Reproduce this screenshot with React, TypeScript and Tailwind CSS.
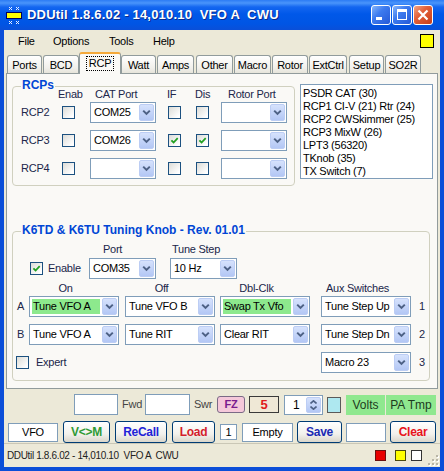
import React from 'react';

const FONT = "font-['Liberation_Sans',Arial,sans-serif]";
const LBL = 'text-[#20264a]';

function Chevron() {
  return (
    <svg width="9" height="7" viewBox="0 0 9 7">
      <path d="M1.2 1.6 L4.5 4.9 L7.8 1.6" stroke="#4D6185" strokeWidth="2" fill="none" />
    </svg>
  );
}

function Combo({ cls, value = '', green = false }: { cls: string; value?: string; green?: boolean }) {
  return (
    <div className={`flex h-[21px] shrink-0 border border-[#7F9DB9] bg-white p-[1px] ${cls}`}>
      <div
        className={`m-[1px] mr-[2px] flex flex-1 items-center overflow-hidden whitespace-nowrap pl-[1px] text-black ${
          green ? 'bg-[#8DE98D]' : ''
        }`}
      >
        {value}
      </div>
      <div className="flex w-[15px] items-center justify-center rounded-[2px] border border-[#BCCDF4] bg-[linear-gradient(to_bottom,#D6E2FC,#B3C7F5)]">
        <Chevron />
      </div>
    </div>
  );
}

function Check({ on = false }: { on?: boolean }) {
  return (
    <div className="flex h-[13px] w-[13px] shrink-0 items-center justify-center border border-[#1C5180] bg-[linear-gradient(135deg,#DCDCD7,#FFFFFF_85%)]">
      {on && (
        <svg width="9" height="9" viewBox="0 0 9 9">
          <path d="M1.4 4.3 L3.6 6.5 L7.7 2.2" stroke="#21A121" strokeWidth="1.8" fill="none" />
        </svg>
      )}
    </div>
  );
}

function Box({ cls, children }: { cls: string; children?: React.ReactNode }) {
  return (
    <div className={`flex shrink-0 items-center justify-center border border-[#7F9DB9] bg-white ${cls}`}>{children}</div>
  );
}

function Btn({ cls, children }: { cls: string; children: React.ReactNode }) {
  return (
    <div
      className={`flex h-[22px] shrink-0 items-center justify-center rounded-[3px] border border-[#003C74] bg-[linear-gradient(to_bottom,#FFFFFF,#F2F1EC_60%,#DAD6CB)] text-[12px] font-bold tracking-[-0.3px] ${cls}`}
    >
      {children}
    </div>
  );
}

function Group({ title, cls, children }: { title: string; cls: string; children: React.ReactNode }) {
  return (
    <div className={`flex shrink-0 flex-col rounded-[4px] border border-[#D0D0BF] ${cls}`}>
      <div className="-mt-[9px] -mb-[5px] ml-[8px] h-[14px] w-fit bg-[#FAF9F6] px-[1px] text-[12px] font-bold leading-[14px] tracking-normal text-[#0046D5]">
        {title}
      </div>
      {children}
    </div>
  );
}

function CapBtn({ kind }: { kind: 'min' | 'max' | 'close' }) {
  const bg =
    kind === 'close'
      ? 'bg-[linear-gradient(135deg,#F2A585,#E2603A_40%,#C83D18)]'
      : 'bg-[linear-gradient(135deg,#86B6FB,#3D7BEF_40%,#2559D7)]';
  return (
    <div className={`flex h-[20px] w-[20px] items-center justify-center rounded-[3px] border border-white ${bg}`}>
      <svg width="18" height="18" viewBox="0 0 18 18">
        {kind === 'min' && <rect x="4" y="11" width="6" height="3" fill="#fff" />}
        {kind === 'max' && (
          <>
            <rect x="4.5" y="3.5" width="9" height="10" fill="none" stroke="#fff" strokeWidth="1" />
            <rect x="4" y="3" width="10" height="3" fill="#fff" />
          </>
        )}
        {kind === 'close' && <path d="M4.5 4.5 L13.5 13.5 M13.5 4.5 L4.5 13.5" stroke="#fff" strokeWidth="2.2" />}
      </svg>
    </div>
  );
}

function AppIcon() {
  return (
    <svg width="16" height="19" viewBox="0 0 16 19">
      <rect x="0.5" y="6.5" width="15" height="6" fill="#FFFF00" stroke="#00005A" />
      <path d="M3 1 L6 4 M6 1 L3 4 M10 1 L13 4 M13 1 L10 4" stroke="#E8EEFF" strokeWidth="1" />
      <path d="M3 15 L6 18 M6 15 L3 18 M10 15 L13 18 M13 15 L10 18" stroke="#E8EEFF" strokeWidth="1" />
    </svg>
  );
}

function Grip() {
  const dots = [
    [9, 1],
    [9, 5],
    [5, 5],
    [9, 9],
    [5, 9],
    [1, 9],
  ];
  return (
    <svg width="12" height="12" viewBox="0 0 12 12">
      {dots.map(([x, y]) => (
        <g key={`${x}-${y}`}>
          <rect x={x + 1} y={y + 1} width="2" height="2" fill="#FFFFFF" />
          <rect x={x} y={y} width="2" height="2" fill="#B8B5A6" />
        </g>
      ))}
    </svg>
  );
}

const tabs = [
  { label: 'Ports', cls: 'w-[35px]' },
  { label: 'BCD', cls: 'ml-[1px] w-[36px]' },
  { label: 'RCP', cls: 'w-[42px]', active: true },
  { label: 'Watt', cls: 'w-[35px]' },
  { label: 'Amps', cls: 'ml-[1px] w-[37px]' },
  { label: 'Other', cls: 'ml-[2px] w-[37px]' },
  { label: 'Macro', cls: 'ml-[1px] w-[37px]' },
  { label: 'Rotor', cls: 'ml-[1px] w-[36px]' },
  { label: 'ExtCtrl', cls: 'ml-[1px] w-[38px]' },
  { label: 'Setup', cls: 'ml-[2px] w-[35px]' },
  { label: 'SO2R', cls: 'ml-[1px] w-[36px]' },
];

const rcpRows = [
  { name: 'RCP2', port: 'COM25', iff: false, dis: false },
  { name: 'RCP3', port: 'COM26', iff: true, dis: true },
  { name: 'RCP4', port: '', iff: false, dis: false },
];

const portList = [
  'PSDR CAT (30)',
  'RCP1 CI-V (21) Rtr (24)',
  'RCP2 CWSkimmer (25)',
  'RCP3 MixW (26)',
  'LPT3 (56320)',
  'TKnob (35)',
  'TX Switch (7)',
];

export default function App() {
  return (
    <div
      className={`flex h-[471px] w-[444px] flex-col overflow-hidden bg-[#0B4ED8] text-[11px] tracking-[-0.25px] text-black ${FONT}`}
    >
      {/* Title bar */}
      <div className="flex h-[30px] shrink-0 items-center bg-[linear-gradient(to_bottom,#2C7BF4_0px,#4A95FB_3px,#1466F0_7px,#0058E9_14px,#0055E4_24px,#0A4FD8_30px)] pl-[6px] pr-[11px]">
        <AppIcon />
        <div className="ml-[5px] whitespace-pre text-[13px] font-bold tracking-[0.2px] text-white [text-shadow:1px_1px_0_#0A2A8C]">
          DDUtil 1.8.6.02 - 14,010.10  VFO A  CWU
        </div>
        <div className="ml-auto flex gap-[1px]">
          <CapBtn kind="min" />
          <CapBtn kind="max" />
          <CapBtn kind="close" />
        </div>
      </div>

      <div className="mx-[4px] flex flex-1 flex-col bg-[#ECE9D8]">
        {/* Menu bar */}
        <div className="flex h-[22px] shrink-0 items-center pl-[14px] pr-[6px]">
          <span className="w-[35px]">File</span>
          <span className="w-[56px]">Options</span>
          <span className="w-[44px]">Tools</span>
          <span>Help</span>
          <div className="ml-auto h-[14px] w-[14px] border border-black bg-[#FFFF00]" />
        </div>

        {/* Tabs */}
        <div className="flex h-[21px] shrink-0 items-end pl-[3px]">
          {tabs.map((t) =>
            t.active ? (
              <div
                key={t.label}
                className={`relative z-10 -mb-[1px] flex h-[22px] items-center justify-center rounded-t-[3px] border-x border-t-2 border-[#919B9C] border-t-[#F5A93A] bg-[#FAF9F6] pb-[1px] ${t.cls}`}
              >
                <span className="border border-dotted border-black px-[2px] leading-[13px]">{t.label}</span>
              </div>
            ) : (
              <div
                key={t.label}
                className={`flex h-[18px] items-center justify-center rounded-t-[3px] border-x border-t border-[#919B9C] bg-[linear-gradient(to_bottom,#FFFFFF,#F1F0EB_70%,#E6E4DA)] pt-[1px] ${t.cls}`}
              >
                {t.label}
              </div>
            ),
          )}
        </div>

        {/* Tab page */}
        <div className="mx-[2px] flex h-[316px] shrink-0 flex-col border border-[#919B9C] bg-[#FAF9F6]">
          <div className="flex items-start">
            <Group title="RCPs" cls="ml-[5px] mt-[12px] h-[100px] w-[283px]">
              <div className={`flex h-[14px] items-center ${LBL}`}>
                <span className="w-[45px]" />
                <span className="w-[37px]">Enab</span>
                <span className="w-[72px]">CAT Port</span>
                <span className="w-[28px]">IF</span>
                <span className="w-[33px]">Dis</span>
                <span>Rotor Port</span>
              </div>
              {rcpRows.map((r, i) => (
                <div key={r.name} className={`flex h-[21px] items-center ${i === 0 ? 'mt-[1px]' : 'mt-[7px]'}`}>
                  <span className={`w-[49px] pl-[8px] ${LBL}`}>{r.name}</span>
                  <Check />
                  <Combo cls="ml-[15px] w-[66px]" value={r.port} />
                  <div className="ml-[12px]">
                    <Check on={r.iff} />
                  </div>
                  <div className="ml-[15px]">
                    <Check on={r.dis} />
                  </div>
                  <Combo cls="ml-[12px] w-[66px]" />
                </div>
              ))}
            </Group>

            <div className="ml-[5px] mt-[10px] h-[95px] w-[133px] shrink-0 border border-[#7F9DB9] bg-white pl-[2px] pt-[2px]">
              {portList.map((p) => (
                <div key={p} className="whitespace-nowrap leading-[13px]">
                  {p}
                </div>
              ))}
            </div>
          </div>

          <Group title="K6TD & K6TU Tuning Knob - Rev. 01.01" cls="ml-[5px] mt-[45px] h-[150px] w-[418px]">
            <div className={`mt-[10px] flex h-[14px] items-center ${LBL}`}>
              <span className="w-[90px]" />
              <span className="w-[69px]">Port</span>
              <span>Tune Step</span>
            </div>
            <div className="mt-[2px] flex h-[21px] items-center">
              <span className="w-[17px]" />
              <Check on />
              <span className={`ml-[5px] w-[41px] ${LBL}`}>Enable</span>
              <Combo cls="w-[67px]" value="COM35" />
              <Combo cls="ml-[14px] w-[67px]" value="10 Hz" />
            </div>
            <div className={`mt-[2px] flex h-[14px] items-center ${LBL}`}>
              <span className="w-[16px]" />
              <span className="w-[73px] text-center">On</span>
              <span className="ml-[23px] w-[73px] text-center">Off</span>
              <span className="ml-[22px] w-[73px] text-center">Dbl-Clk</span>
              <span className="ml-[28px] w-[73px] text-center">Aux Switches</span>
            </div>
            <div className="mt-[1px] flex h-[21px] items-center">
              <span className={`w-[16px] pl-[4px] ${LBL}`}>A</span>
              <Combo cls="w-[90px]" value="Tune VFO A" green />
              <Combo cls="ml-[6px] w-[90px]" value="Tune VFO B" />
              <Combo cls="ml-[5px] w-[90px]" value="Swap Tx Vfo" green />
              <Combo cls="ml-[11px] w-[90px]" value="Tune Step Up" />
              <span className={`ml-[8px] ${LBL}`}>1</span>
            </div>
            <div className="mt-[7px] flex h-[21px] items-center">
              <span className={`w-[16px] pl-[4px] ${LBL}`}>B</span>
              <Combo cls="w-[90px]" value="Tune VFO A" />
              <Combo cls="ml-[6px] w-[90px]" value="Tune RIT" />
              <Combo cls="ml-[5px] w-[90px]" value="Clear RIT" />
              <Combo cls="ml-[11px] w-[90px]" value="Tune Step Dn" />
              <span className={`ml-[8px] ${LBL}`}>2</span>
            </div>
            <div className="mt-[7px] flex h-[21px] items-center">
              <div className="flex w-[308px] items-center pl-[3px]">
                <Check />
                <span className={`ml-[7px] ${LBL}`}>Expert</span>
              </div>
              <Combo cls="w-[90px]" value="Macro 23" />
              <span className={`ml-[8px] ${LBL}`}>3</span>
            </div>
          </Group>
        </div>

        {/* Meter row */}
        <div className="mt-[5px] flex h-[21px] shrink-0 items-center">
          <Box cls="ml-[70px] h-[21px] w-[44px]" />
          <span className="w-[27px] pl-[4px] text-[#444]">Fwd</span>
          <Box cls="h-[21px] w-[45px]" />
          <span className="w-[27px] pl-[4px] text-[#444]">Swr</span>
          <div className="flex h-[17px] w-[28px] shrink-0 items-center justify-center rounded-[3px] border border-[#7A6A86] bg-[#F5C8DA] text-[11px] font-bold text-[#7A1B8E]">
            FZ
          </div>
          <div className="ml-[4px] flex h-[17px] w-[30px] shrink-0 items-center justify-center border border-[#3A3A3A] bg-[#EFE8D6] text-[13px] font-bold text-[#E01B1B]">
            5
          </div>
          <div className="ml-[5px] flex h-[20px] w-[39px] shrink-0 border border-[#7F9DB9] bg-white p-[1px]">
            <div className="flex flex-1 items-center pl-[7px] text-[12px]">1</div>
            <div className="flex w-[15px] flex-col items-center justify-center gap-[2px] rounded-[2px] border border-[#BCCDF4] bg-[linear-gradient(to_bottom,#D6E2FC,#B3C7F5)]">
              <svg width="7" height="4" viewBox="0 0 7 4">
                <path d="M0.5 3.5 L3.5 0.8 L6.5 3.5" stroke="#4D6185" strokeWidth="1.6" fill="none" />
              </svg>
              <svg width="7" height="4" viewBox="0 0 7 4">
                <path d="M0.5 0.5 L3.5 3.2 L6.5 0.5" stroke="#4D6185" strokeWidth="1.6" fill="none" />
              </svg>
            </div>
          </div>
          <div className="ml-[4px] h-[16px] w-[14px] shrink-0 border border-[#5A5A5A] bg-[#AEE8F0]" />
          <div className="ml-[5px] flex h-[20px] w-[39px] shrink-0 items-center justify-center bg-[#8FE88F] text-[12px] tracking-normal text-[#1E3A1E]">
            Volts
          </div>
          <div className="ml-[1px] flex h-[20px] w-[50px] shrink-0 items-center justify-center bg-[#8FE88F] text-[12px] tracking-normal text-[#1E3A1E]">
            PA Tmp
          </div>
        </div>

        {/* Memory row */}
        <div className="mt-[6px] flex h-[22px] shrink-0 items-center">
          <Box cls="ml-[4px] h-[19px] w-[50px]">VFO</Box>
          <Btn cls="ml-[5px] w-[47px] text-[#2E9A35]">V&lt;&gt;M</Btn>
          <Btn cls="ml-[5px] w-[52px] text-[#1F22D8]">ReCall</Btn>
          <Btn cls="ml-[5px] w-[43px] text-[#D41C2C]">Load</Btn>
          <Box cls="ml-[5px] h-[16px] w-[17px]">1</Box>
          <Box cls="ml-[5px] h-[19px] w-[51px]">Empty</Box>
          <Btn cls="ml-[4px] w-[45px] text-[#1A2AB4]">Save</Btn>
          <Box cls="ml-[4px] h-[19px] w-[40px]" />
          <Btn cls="ml-[4px] w-[46px] text-[#E8121C]">Clear</Btn>
        </div>

        {/* Status bar */}
        <div className="flex h-[24px] shrink-0 items-center border-t border-[#CAC7B6] pl-[3px] pr-[1px]">
          <span className="whitespace-pre text-[10px] tracking-[-0.35px] text-[#222]">
            DDUtil 1.8.6.02 - 14,010.10  VFO A  CWU
          </span>
          <div className="ml-auto h-[11px] w-[11px] border border-[#6A1010] bg-[#E80000]" />
          <div className="ml-[9px] h-[11px] w-[11px] border border-[#4A4A10] bg-[#FFFF00]" />
          <div className="ml-[5px] h-[11px] w-[11px] border border-[#333] bg-white" />
          <div className="ml-[5px] self-end pb-[1px]">
            <Grip />
          </div>
        </div>
      </div>
      <div className="h-[4px] shrink-0" />
    </div>
  );
}
